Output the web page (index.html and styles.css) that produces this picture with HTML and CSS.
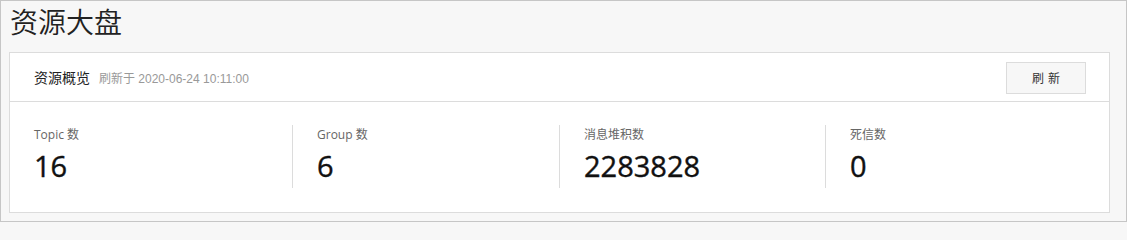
FILE: index.html
```html
<!DOCTYPE html>
<html lang="zh-CN">
<head>
<meta charset="utf-8">
<title>资源大盘</title>
<link rel="stylesheet" href="styles.css">
</head>
<body>
<div class="page">
  <h1 class="title">资源大盘</h1>
  <section class="card">
    <header class="card-head">
      <div class="head-text">
        <span class="head-title">资源概览</span>
        <span class="head-sub">刷新于 2020-06-24 10:11:00</span>
      </div>
      <button class="btn">刷 新</button>
    </header>
    <div class="stats">
      <div class="stat">
        <div class="stat-label">Topic 数</div>
        <div class="stat-value">16</div>
      </div>
      <div class="stat">
        <div class="stat-label">Group 数</div>
        <div class="stat-value">6</div>
      </div>
      <div class="stat">
        <div class="stat-label">消息堆积数</div>
        <div class="stat-value">2283828</div>
      </div>
      <div class="stat">
        <div class="stat-label">死信数</div>
        <div class="stat-value">0</div>
      </div>
    </div>
  </section>
</div>
</body>
</html>
```

FILE: styles.css
```css
* { box-sizing: border-box; }

html, body {
  margin: 0;
  padding: 0;
  background: #f7f7f7;
}

body {
  font-family: "Open Sans", "Noto Sans CJK SC", sans-serif;
  color: #333;
}

.page {
  width: 1127px;
  height: 222px;
  border: 1px solid #c6c6c6;
  background: #f7f7f7;
  padding: 0 16px 8px 8px;
}

.title {
  margin: 0 0 11px 0;
  height: 40px;
  padding-left: 1px;
  font-family: "Noto Sans CJK SC", sans-serif;
  font-weight: 350;
  font-size: 28px;
  line-height: 40px;
  color: #222;
}

.card {
  background: #fff;
  border: 1px solid #dcdcdc;
}

.card-head {
  height: 49px;
  border-bottom: 1px solid #dcdcdc;
  padding: 0 23px 0 24px;
  display: flex;
  align-items: center;
  justify-content: space-between;
}

.head-text {
  display: flex;
  align-items: baseline;
  gap: 9px;
}

.head-title {
  font-family: "Noto Sans CJK SC", sans-serif;
  font-size: 14px;
  color: #222;
}

.head-sub {
  font-family: "Liberation Sans", "Noto Sans CJK SC", sans-serif;
  font-size: 12px;
  color: #999;
}

.btn {
  width: 80px;
  height: 32px;
  margin-top: 1px;
  background: #f7f7f7;
  border: 1px solid #dcdcdc;
  font-family: "Open Sans", "Noto Sans CJK SC", sans-serif;
  font-size: 12px;
  word-spacing: 1px;
  color: #333;
  padding: 0;
}

.stats {
  display: grid;
  grid-template-columns: 258px 267px 266px 1fr;
  padding: 23px 0 24px 24px;
}

.stat {
  height: 63px;
}

.stat + .stat {
  border-left: 1px solid #dcdcdc;
  padding-left: 24px;
}

.stat-label {
  font-size: 12px;
  line-height: 18px;
  margin-top: 1px;
  color: #666;
}

.stat-value {
  margin-top: 2px;
  font-family: "Open Sans", sans-serif;
  font-size: 29px;
  line-height: 40px;
  font-weight: 400;
  color: #111;
  -webkit-text-stroke: 0.4px #111;
}
```
